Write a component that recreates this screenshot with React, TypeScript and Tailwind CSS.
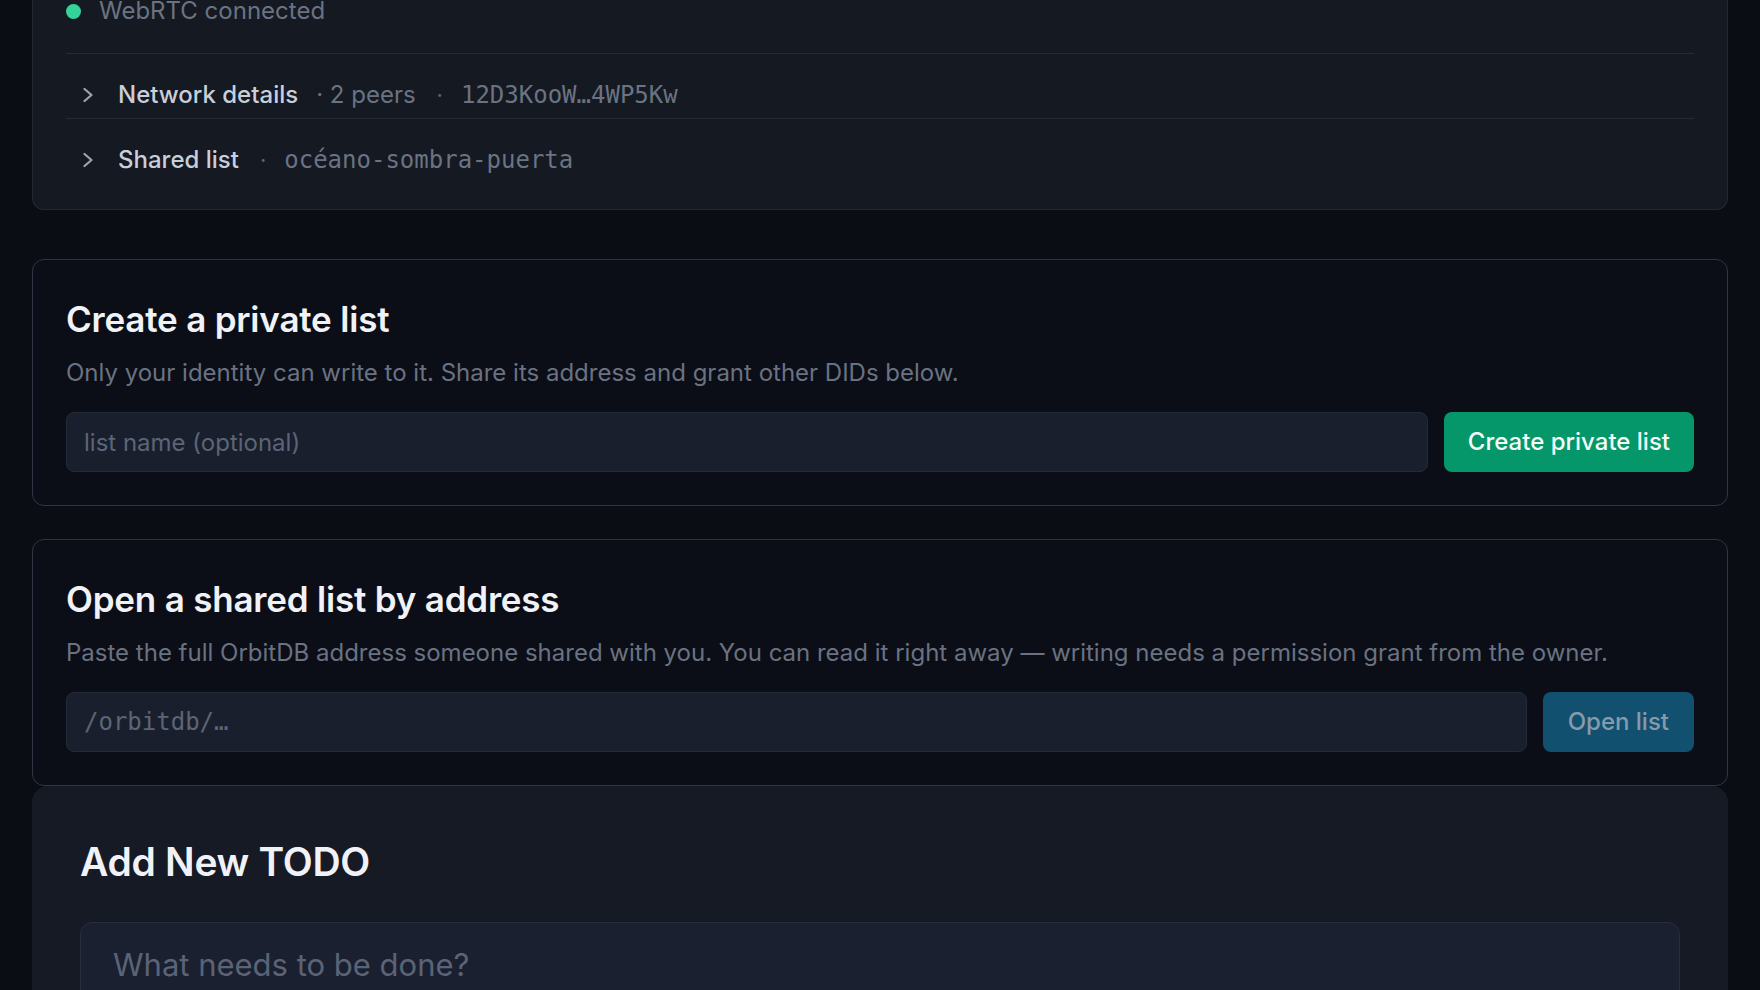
import React, { useState } from 'react';

const sans = "font-['Inter','Noto_Sans',sans-serif]";
const mono = "font-['DejaVu_Sans_Mono','Liberation_Mono',monospace]";

const Chevron: React.FC<{ open: boolean }> = ({ open }) => (
  <svg
    width="12"
    height="16"
    viewBox="0 0 12 16"
    className={`shrink-0 text-[#9aa3b0] transition-transform ${open ? 'rotate-90' : ''}`}
    fill="none"
    stroke="currentColor"
    strokeWidth="2.3"
    strokeLinecap="round"
    strokeLinejoin="round"
  >
    <path d="M2.5 2 L9.5 8 L2.5 14" />
  </svg>
);

interface DetailRowProps {
  label: string;
  children: React.ReactNode;
}

const DetailRow: React.FC<DetailRowProps> = ({ label, children }) => {
  const [open, setOpen] = useState(false);
  return (
    <div className="border-t border-[#242a36] pt-[26px] pb-[8px]">
      <button
        type="button"
        onClick={() => setOpen(!open)}
        className="flex items-center h-[30px] leading-[30px] text-left"
      >
        <span className="w-[52px] pl-[16px] flex items-center">
          <Chevron open={open} />
        </span>
        <span className="text-[24px] font-medium text-[#c8cfda]">{label}</span>
        {children}
      </button>
    </div>
  );
};

const Dot = () => <span className="ml-[21px] mr-[18px] text-[22px] text-[#5d6573]">·</span>;

interface ListCardProps {
  title: string;
  description: string;
  placeholder: string;
  action: string;
  monoInput?: boolean;
  variant: 'create' | 'open';
  className?: string;
}

const ListCard: React.FC<ListCardProps> = ({ title, description, placeholder, action, monoInput, variant, className }) => {
  const [value, setValue] = useState('');
  const disabled = variant === 'open' && value.trim() === '';
  return (
    <section className={`rounded-xl border border-[#2e3646] bg-[#0b0e16] px-[33px] pt-[39px] pb-[33px] ${className ?? ''}`}>
      <h2 className="text-[35px] leading-[40px] font-semibold text-[#f0f2f7] tracking-[-0.2px]">{title}</h2>
      <p className="mt-[19px] text-[24px] leading-[30px] text-[#6a7282]">{description}</p>
      <div className="mt-[24px] flex gap-4">
        <input
          value={value}
          onChange={e => setValue(e.target.value)}
          placeholder={placeholder}
          className={`flex-1 min-w-0 h-[60px] rounded-lg border border-[#232a38] bg-[#1a1f2d] px-[17px] text-[#e5e7eb] placeholder:text-[#5c6576] outline-none ${
            monoInput ? `${mono} text-[24px]` : 'text-[24px]'
          }`}
        />
        <button
          type="button"
          disabled={disabled}
          className={
            variant === 'create'
              ? 'h-[60px] rounded-lg bg-[#059669] px-6 text-[24px] font-medium text-[#f2fbf7]'
              : 'h-[60px] rounded-lg bg-[#11506f] px-[25px] text-[24px] font-medium text-[#869aab]'
          }
        >
          {action}
        </button>
      </div>
    </section>
  );
};

export default function App() {
  const [todo, setTodo] = useState('');

  return (
    <div className={`${sans} h-[990px] overflow-hidden bg-[#0a0d14] px-8`}>
      {/* connection status + collapsible details */}
      <section className="rounded-b-xl border border-t-0 border-[#232934] bg-[#141922] px-[33px] pb-[26px]">
        <div className="-mt-[4px] flex items-center h-[30px] mb-[27px]">
          <span className="h-[15px] w-[15px] rounded-full bg-[#34d399]" />
          <span className="ml-[18px] text-[24px] text-[#6b7382]">WebRTC connected</span>
        </div>
        <DetailRow label="Network details">
          <span className="ml-[18px] text-[24px] text-[#6b7382]">· 2 peers</span>
          <Dot />
          <span className={`${mono} text-[24px] text-[#6b7382]`}>12D3KooW…4WP5Kw</span>
        </DetailRow>
        <DetailRow label="Shared list">
          <Dot />
          <span className={`${mono} text-[24px] text-[#6b7382]`}>océano-sombra-puerta</span>
        </DetailRow>
      </section>

      <ListCard
        className="mt-[49px]"
        title="Create a private list"
        description="Only your identity can write to it. Share its address and grant other DIDs below."
        placeholder="list name (optional)"
        action="Create private list"
        variant="create"
      />

      <ListCard
        className="mt-[33px]"
        title="Open a shared list by address"
        description="Paste the full OrbitDB address someone shared with you. You can read it right away — writing needs a permission grant from the owner."
        placeholder="/orbitdb/…"
        action="Open list"
        monoInput
        variant="open"
      />

      <section className="rounded-t-2xl bg-[#151a24] px-12 pt-[54px] pb-12">
        <h2 className="text-[39px] leading-[44px] font-semibold text-[#f0f2f7] tracking-[-0.3px]">Add New TODO</h2>
        <input
          value={todo}
          onChange={e => setTodo(e.target.value)}
          placeholder="What needs to be done?"
          className="mt-[38px] block w-full h-[84px] rounded-xl border border-[#262d3b] bg-[#1b2030] px-8 text-[31px] text-[#e5e7eb] placeholder:text-[#5a6476] outline-none"
        />
      </section>
    </div>
  );
}
